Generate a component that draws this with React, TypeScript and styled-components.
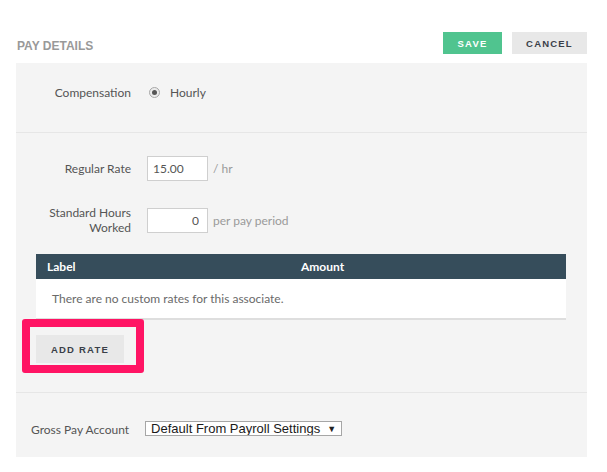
import React from 'react'
import styled, { createGlobalStyle } from 'styled-components'

const GlobalStyle = createGlobalStyle`
  html, body {
    margin: 0;
    padding: 0;
    background: #fff;
  }
  body {
    font-family: Lato, "Liberation Sans", sans-serif;
    color: #555;
  }
`

const Page = styled.div`
  width: 607px;
  padding: 32px 20px 0 16px;
  box-sizing: border-box;
`

const Header = styled.div`
  display: flex;
  align-items: center;
  justify-content: space-between;
  height: 22px;
  margin-bottom: 9px;
`

const Title = styled.h2`
  margin: 5px 0 0 1px;
  font-family: "Liberation Sans", Arial, sans-serif;
  font-size: 12px;
  font-weight: 700;
  color: #999;
  text-transform: uppercase;
`

const Actions = styled.div`
  display: flex;
  gap: 10px;
`

const ActionButton = styled.button<{ $primary?: boolean }>`
  height: 22px;
  border: none;
  border-radius: 0;
  padding: 0;
  width: ${({ $primary }) => ($primary ? '59px' : '75px')};
  background: ${({ $primary }) => ($primary ? '#50c48f' : '#e8e8e8')};
  color: ${({ $primary }) => ($primary ? '#fff' : '#3a3f48')};
  font-family: "Liberation Sans", Arial, sans-serif;
  font-size: 9.5px;
  font-weight: 700;
  letter-spacing: 1.2px;
  text-transform: uppercase;
  cursor: pointer;
`

const Panel = styled.div`
  background: #f4f4f4;
`

const Section = styled.div<{ $pt: number; $pb: number; $pl?: number; $last?: boolean }>`
  padding: ${({ $pt, $pb, $pl }) => `${$pt}px 21px ${$pb}px ${$pl ?? 20}px`};
  border-bottom: ${({ $last }) => ($last ? 'none' : '1px solid #e6e6e6')};
  display: flex;
  flex-direction: column;
`

const FieldRow = styled.div<{ $gap?: number }>`
  display: grid;
  grid-template-columns: 95px auto;
  column-gap: 16px;
  align-items: center;
  justify-content: start;
  margin-bottom: ${({ $gap }) => ($gap ?? 0)}px;
`

const FieldLabel = styled.label`
  text-align: right;
  font-size: 12px;
  line-height: 15px;
  color: #555;
`

const InlineRow = styled.div`
  display: flex;
  align-items: center;
  gap: 16px;
`

const InlineLabel = styled.label`
  font-size: 12px;
  line-height: 15px;
  white-space: nowrap;
  color: #555;
  padding-top: 2px;
`

const Control = styled.div`
  display: flex;
  align-items: center;
  gap: 5px;
`

const Radio = styled.span`
  width: 11px;
  height: 11px;
  margin: 0 5px 0 2px;
  border-radius: 50%;
  border: 1px solid #a8a8a8;
  background: #ebebeb;
  box-sizing: border-box;
  display: flex;
  align-items: center;
  justify-content: center;

  &::after {
    content: '';
    width: 5px;
    height: 5px;
    border-radius: 50%;
    background: #555;
  }
`

const ControlText = styled.span<{ $muted?: boolean }>`
  font-size: 12px;
  color: ${({ $muted }) => ($muted ? '#9a9a9a' : '#555')};
`

const NumberInput = styled.input<{ $align?: 'left' | 'right' }>`
  width: 61px;
  height: 25px;
  box-sizing: border-box;
  border: 1px solid #cfcfcf;
  background: #fff;
  padding: 0 8px 0 5px;
  font-family: Lato, "Liberation Sans", sans-serif;
  font-size: 12px;
  color: #555;
  text-align: ${({ $align }) => $align ?? 'left'};
  outline: none;
`

const Table = styled.div`
  margin-top: 19px;
  background: #fff;
  border-bottom: 2px solid #dedede;
`

const TableHead = styled.div`
  display: grid;
  grid-template-columns: 254px 1fr;
  height: 25px;
  align-items: center;
  background: #364d5b;
  color: #fff;
  font-size: 12px;
  font-weight: 700;
  padding: 0 11px;
`

const EmptyRow = styled.div`
  height: 39px;
  display: flex;
  align-items: center;
  padding-left: 16px;
  font-size: 12px;
  color: #6a6a6a;
`

const AddRateWrap = styled.div`
  position: relative;
  align-self: flex-start;
  margin-top: 15px;
`

const AddRateButton = styled.button`
  display: block;
  width: 88px;
  height: 28px;
  border: none;
  padding: 0;
  background: #e8e8e8;
  color: #3a3f48;
  font-family: "Liberation Sans", Arial, sans-serif;
  font-size: 9.5px;
  font-weight: 700;
  letter-spacing: 1.2px;
  cursor: pointer;
`

const Highlight = styled.span`
  position: absolute;
  left: -14px;
  top: -16px;
  width: 122px;
  height: 54px;
  box-sizing: border-box;
  border: 8px solid #ff1464;
  border-radius: 3px;
  pointer-events: none;
`

const SelectWrap = styled.div`
  position: relative;
  display: inline-flex;

  &::after {
    content: '▼';
    position: absolute;
    right: 6px;
    top: 3px;
    font-size: 9px;
    line-height: 9px;
    color: #222;
    pointer-events: none;
  }
`

const Select = styled.select`
  appearance: none;
  -webkit-appearance: none;
  width: 197px;
  height: 15px;
  box-sizing: border-box;
  border: 1px solid #a6a6a6;
  border-radius: 0;
  background: #fff;
  padding: 0 0 0 5px;
  font-family: "Liberation Sans", Arial, sans-serif;
  font-size: 13px;
  line-height: 13px;
  color: #1a1a1a;
  outline: none;
`

export default function App() {
  return (
    <Page>
      <GlobalStyle />
      <Header>
        <Title>Pay Details</Title>
        <Actions>
          <ActionButton $primary>Save</ActionButton>
          <ActionButton>Cancel</ActionButton>
        </Actions>
      </Header>
      <Panel>
        <Section $pt={22} $pb={32}>
          <FieldRow>
            <FieldLabel>Compensation</FieldLabel>
            <Control>
              <Radio />
              <ControlText>Hourly</ControlText>
            </Control>
          </FieldRow>
        </Section>
        <Section $pt={23} $pb={29}>
          <FieldRow $gap={24}>
            <FieldLabel>Regular Rate</FieldLabel>
            <Control>
              <NumberInput defaultValue="15.00" />
              <ControlText $muted>/ hr</ControlText>
            </Control>
          </FieldRow>
          <FieldRow>
            <FieldLabel>Standard Hours Worked</FieldLabel>
            <Control>
              <NumberInput $align="right" defaultValue="0" />
              <ControlText $muted>per pay period</ControlText>
            </Control>
          </FieldRow>
          <Table>
            <TableHead>
              <span>Label</span>
              <span>Amount</span>
            </TableHead>
            <EmptyRow>There are no custom rates for this associate.</EmptyRow>
          </Table>
          <AddRateWrap>
            <AddRateButton>ADD RATE</AddRateButton>
            <Highlight />
          </AddRateWrap>
        </Section>
        <Section $pt={27} $pb={20} $pl={15} $last>
          <InlineRow>
            <InlineLabel>Gross Pay Account</InlineLabel>
            <SelectWrap>
              <Select defaultValue="default">
                <option value="default">Default From Payroll Settings</option>
              </Select>
            </SelectWrap>
          </InlineRow>
        </Section>
      </Panel>
    </Page>
  )
}
